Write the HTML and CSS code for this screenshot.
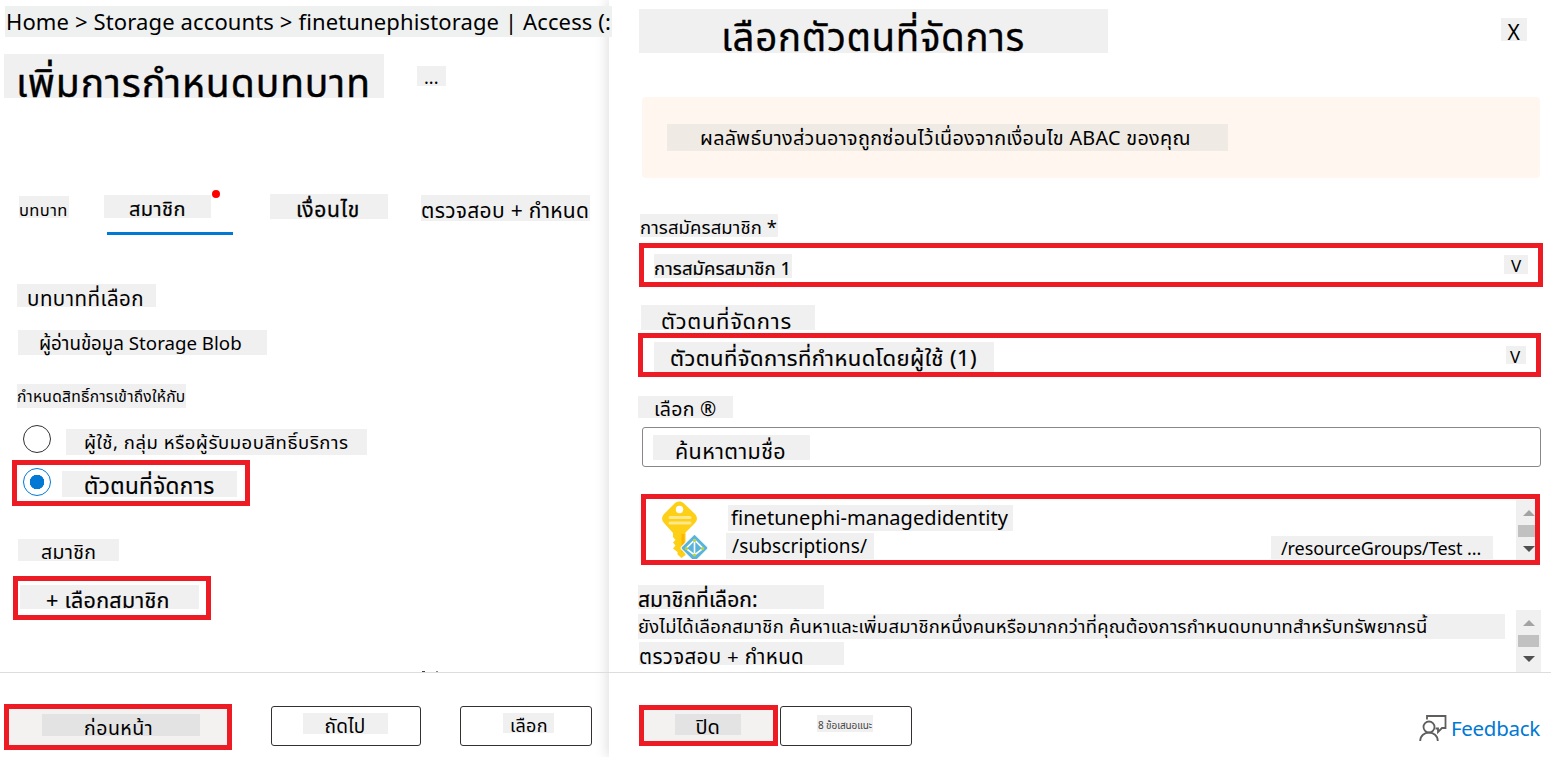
FILE: index.html
```html
<!DOCTYPE html>
<html lang="th">
<head>
<meta charset="utf-8">
<title>เพิ่มการกำหนดบทบาท</title>
<link rel="stylesheet" href="styles.css">
</head>
<body>
<div class="app">
  <main class="blade">
    <nav class="tag crumb">Home &gt; Storage accounts &gt; finetunephistorage | Access (:</nav>
    <header class="blade-head">
      <h1 class="tag title">เพิ่มการกำหนดบทบาท</h1>
      <span class="tag more">...</span>
    </header>
    <div class="tabs">
      <span class="tag tab-role">บทบาท</span>
      <div class="tab-active"><span class="tag tab-member">สมาชิก</span><i class="dot"></i></div>
      <span class="tag tab-cond">เงื่อนไข</span>
      <span class="tag tab-review">ตรวจสอบ + กำหนด</span>
    </div>
    <span class="tag role-label">บทบาทที่เลือก</span>
    <span class="tag role-value">ผู้อ่านข้อมูล Storage Blob</span>
    <span class="tag assign-label">กำหนดสิทธิ์การเข้าถึงให้กับ</span>
    <div class="option"><i class="radio"></i><span class="tag opt-user">ผู้ใช้, กลุ่ม หรือผู้รับมอบสิทธิ์บริการ</span></div>
    <div class="option option-on marked"><i class="radio radio-on"></i><span class="tag opt-managed">ตัวตนที่จัดการ</span></div>
    <span class="tag members-label">สมาชิก</span>
    <div class="add marked"><span class="tag add-text">+ เลือกสมาชิก</span></div>
    <div class="specks"><i></i><i></i></div>
    <footer class="foot foot-left">
      <div class="btn prev marked"><span class="tag prev-text">ก่อนหน้า</span></div>
      <div class="btn next"><span class="tag next-text">ถัดไป</span></div>
      <div class="btn pick"><span class="tag pick-text">เลือก</span></div>
    </footer>
  </main>
  <aside class="panel">
    <header class="panel-head">
      <h2 class="tag panel-title">เลือกตัวตนที่จัดการ</h2>
      <span class="tag close">X</span>
    </header>
    <div class="banner"><span class="tag banner-text">ผลลัพธ์บางส่วนอาจถูกซ่อนไว้เนื่องจากเงื่อนไข ABAC ของคุณ</span></div>
    <span class="tag sub-label">การสมัครสมาชิก *</span>
    <div class="select sub marked"><span class="tag sub-text">การสมัครสมาชิก 1</span><span class="tag chev">V</span></div>
    <span class="tag mi-label">ตัวตนที่จัดการ</span>
    <div class="select mi marked"><span class="tag mi-text">ตัวตนที่จัดการที่กำหนดโดยผู้ใช้ (1)</span><span class="tag chev chev-mi">V</span></div>
    <span class="tag find-label">เลือก ®</span>
    <div class="search"><span class="tag search-text">ค้นหาตามชื่อ</span></div>
    <div class="list marked">
      <svg class="key" width="48" height="60" viewBox="0 0 48 60">
        <path d="M18.500 2.500 Q20.500 2 22.500 4 L34 15 Q38 19.500 34 24 L24.500 33.500 V56 L20.500 59 L16.500 55.500 V53 L12 49.500 L14.500 46.500 L12 43.500 L14.500 41 L12 38 V34 L3 24 Q-1 19.500 3 15 L14 4 Q16 2 18.500 2.500 Z" fill="#fdd017"/>
        <path d="M20.500 35 H23.500 V50 L20.500 54 Z" fill="#ffb400"/>
        <circle cx="18.500" cy="10.500" r="3.700" fill="#fff"/>
        <path d="M9 18.500 H29 M9 24 H29" stroke="#ffe78c" stroke-width="3" stroke-linecap="round"/>
        <rect x="23.500" y="39" width="20" height="20" rx="2" transform="rotate(45 33.500 49)" fill="#59b4dc" stroke="#fff" stroke-width="1"/>
        <path d="M33.500 40 V57 M33.500 41 L25 49.500 L33.500 56 L42 49.500 Z" fill="none" stroke="#fff" stroke-width="1.600"/>
        <g fill="#b8d432"><circle cx="33.500" cy="41.500" r="1.600"/><circle cx="25.500" cy="49.500" r="1.600"/><circle cx="41.500" cy="49.500" r="1.600"/><circle cx="33.500" cy="56" r="1.600"/></g>
      </svg>
      <div class="list-lines">
        <span class="tag list-name">finetunephi-managedidentity</span>
        <div class="list-path"><span class="tag list-sub">/subscriptions/</span><span class="tag list-group">/resourceGroups/Test ...</span></div>
      </div>
      <div class="scroll"><i class="up"></i><i class="thumb"></i><i class="down"></i></div>
    </div>
    <div class="chosen">
      <div class="chosen-lines">
        <span class="tag chosen-label">สมาชิกที่เลือก:</span>
        <span class="tag chosen-desc">ยังไม่ได้เลือกสมาชิก ค้นหาและเพิ่มสมาชิกหนึ่งคนหรือมากกว่าที่คุณต้องการกำหนดบทบาทสำหรับทรัพยากรนี้</span>
        <span class="tag chosen-review">ตรวจสอบ + กำหนด</span>
      </div>
      <div class="scroll"><i class="up"></i><i class="thumb"></i><i class="down"></i></div>
    </div>
    <footer class="foot foot-right">
      <div class="btn shut marked"><span class="tag shut-text">ปิด</span></div>
      <div class="btn tips"><span class="tag tips-text">8 ข้อเสนอแนะ</span></div>
      <a class="feedback">
        <svg width="28" height="28" viewBox="0 0 28 28" fill="none" stroke="#605e5c" stroke-width="1.800">
          <path d="M8 5.500 V2 H26.500 V14 H23 L19 18 V14.500 H16.500"/><circle cx="10" cy="13" r="5.500"/><path d="M1.200 27 C1.200 15.800 18.800 15.800 18.800 27"/>
        </svg>
        <span class="tag fb-text">Feedback</span>
      </a>
    </footer>
  </aside>
</div>
</body>
</html>
```
FILE: styles.css
```css
* { box-sizing: border-box; }
body { margin: 0; background: #fff; overflow: hidden; }
h1, h2 { margin: 0; font-weight: 400; }
i { display: block; flex: none; }
.app { display: flex; width: 1551px; height: 757px; font-family: "Noto Sans", "Noto Sans Thai", sans-serif; color: #000; }

/* Shaded label: --b is the baseline offset from its top, --x the text inset */
.tag {
  display: block; flex: none; white-space: nowrap; background: #f0f0f0;
  width: var(--w); height: var(--h); padding-left: var(--x, 0);
  font-size: var(--fs); letter-spacing: var(--ls, 0);
  line-height: calc(2 * (var(--b) - 0.388 * var(--fs)));
}
.marked { border: 5px solid #ed1c24; }

.blade { width: 609px; flex: none; display: flex; flex-direction: column; }
.crumb { --w: 607px; --h: 31px; --x: 1px; --b: 24px; --fs: 22px; --ls: 0.13px; margin: 6px 0 0 5px; background: #eff1f1; position: relative; z-index: 2; }
.blade-head { display: flex; margin: 17px 0 0 4px; height: 44px; }
.title { --w: 380px; --h: 44px; --x: 12px; --b: 43px; --fs: 39px; --ls: 0.95px; -webkit-text-stroke: 0.4px #000; }
.more { --w: 29px; --h: 20px; --x: 7px; --b: 18px; --fs: 18px; margin: 12px 0 0 33px; }
.tabs { display: flex; margin: 96px 0 0 19px; height: 41px; }
.tab-role { --w: 50px; --h: 22px; --x: 0px; --b: 20px; --fs: 16.500px; --ls: 0.4px; margin-top: 2px; }
.tab-active { margin: 1px 0 0 35px; width: 129px; height: 40px; position: relative; }
.tab-active::after { content: ""; display: block; margin: 14px 0 0 3px; width: 126px; height: 3px; background: #0078d4; }
.tab-member { --w: 107px; --h: 23px; --x: 25px; --b: 22px; --fs: 20px; --ls: 0.4px; -webkit-text-stroke: 0.2px #000; }
.dot { position: absolute; left: 108px; top: -5px; width: 8px; height: 8px; border-radius: 50%; background: #f00; }
.tab-cond { --w: 118px; --h: 25px; --x: 26px; --b: 24px; --fs: 21px; --ls: 0.8px; -webkit-text-stroke: 0.3px #000; margin-left: 37px; }
.tab-review { --w: 169px; --h: 26px; --x: 0px; --b: 24px; --fs: 21px; --ls: 0.3px; margin: 1px 0 0 33px; }
.role-label { --w: 139px; --h: 23px; --x: 10px; --b: 22px; --fs: 20.500px; --ls: 0.5px; margin: 49px 0 0 17px; }
.role-value { --w: 249px; --h: 25px; --x: 21px; --b: 20px; --fs: 18.700px; margin: 23px 0 0 18px; }
.assign-label { --w: 169px; --h: 24px; --x: 0px; --b: 19px; --fs: 15.600px; --ls: 0.25px; margin: 29px 0 0 17px; }
.option { display: flex; margin: 17px 0 0 23px; height: 30px; }
.radio { width: 28px; height: 28px; border: 1px solid #323130; border-radius: 50%; }
.opt-user { --w: 301px; --h: 26px; --x: 18px; --b: 20px; --fs: 18.500px; --ls: 0.54px; margin: 4px 0 0 15px; }
.option-on { width: 238px; height: 46px; margin: 5px 0 0 12px; padding: 3px 0 0 6px; }
.radio-on { border-color: #0078d4; background: radial-gradient(circle, #0078d4 0 7px, #fff 7.500px); }
.opt-managed { --w: 175px; --h: 26px; --x: 22px; --b: 24px; --fs: 22.500px; --ls: 0.4px; -webkit-text-stroke: 0.2px #000; margin: 3px 0 0 11px; }
.members-label { --w: 101px; --h: 22px; --x: 23px; --b: 21px; --fs: 19.500px; --ls: 0.4px; margin: 33px 0 0 18px; }
.add { width: 198px; height: 44px; margin: 15px 0 0 13px; padding: 4px 0 0 2px; }
.add-text { --w: 179px; --h: 24px; --x: 26px; --b: 23.500px; --fs: 21.500px; --ls: 0.3px; -webkit-text-stroke: 0.2px #000; }
.specks { display: flex; gap: 11px; margin: 51px 0 0 422px; height: 1px; }
.specks i { width: 3px; height: 1px; background: #444; }
.specks i + i { width: 2px; background: #888; }
.foot { display: flex; border-top: 1px solid #ddd; height: 85px; }
.btn { border: 1px solid #323130; border-radius: 3px; height: 40px; flex: none; }
.foot-left { padding: 31px 0 0 4px; }
.btn.marked { border: 5px solid #ed1c24; background: #f3f2f1; border-radius: 0; }
.btn.prev { width: 228px; height: 46px; padding: 5px 0 0 33px; }
.prev-text { --w: 158px; --h: 22px; --x: 42px; --b: 22px; --fs: 19.500px; --ls: 0.5px; background: #e3e3e3; }
.next { width: 150px; margin: 2px 0 0 39px; padding: 6px 0 0 31px; }
.next-text { --w: 85px; --h: 21px; --x: 21.500px; --b: 21px; --fs: 19px; --ls: 0.2px; }
.pick { width: 132px; margin: 2px 0 0 39px; padding: 6px 0 0 42px; }
.pick-text { --w: 51px; --h: 20px; --x: 7px; --b: 19.500px; --fs: 18px; --ls: 0.3px; }

.panel { width: 942px; flex: none; display: flex; flex-direction: column; background: #fff; position: relative; z-index: 1; box-shadow: -2px 0 12px rgba(0,0,0,.13); }
.blade, .crumb { z-index: 2; }
.panel-head { display: flex; justify-content: space-between; margin: 9px 24px 0 30px; height: 44px; }
.panel-title { --w: 469px; --h: 44px; --x: 82px; --b: 42px; --fs: 38.500px; --ls: 0.65px; -webkit-text-stroke: 0.3px #000; }
.close { --w: 26px; --h: 23px; --x: 6.500px; --b: 22.500px; --fs: 21px; margin-top: 9px; }
.banner { margin: 44px 0 0 33px; width: 898px; height: 81px; border-radius: 4px; background: #fff6f0; padding: 27px 0 0 25px; }
.banner-text { --w: 561px; --h: 27px; --x: 33px; --b: 22px; --fs: 19.800px; --ls: 0.31px; background: #efeae4; }
.sub-label { --w: 138px; --h: 23px; --x: 0px; --b: 20px; --fs: 18.500px; --ls: 0.1px; margin: 36px 0 0 31px; }
.select { display: flex; justify-content: space-between; height: 44px; }
.sub { width: 904px; margin: 6px 0 0 30px; padding: 6px 10px 0; }
.sub-text { --w: 138px; --h: 24px; --x: 0px; --b: 21px; --fs: 18.500px; --ls: 0.08px; -webkit-text-stroke: 0.2px #000; }
.chev { --w: 24px; --h: 19px; --x: 7px; --b: 18px; --fs: 17px; margin-top: 1px; }
.mi-label { --w: 174px; --h: 25px; --x: 20px; --b: 24px; --fs: 22px; --ls: 0.7px; margin: 18px 0 0 32px; }
.mi { width: 903px; margin: 3px 0 0 29px; padding: 4px 10px 0 11px; }
.mi-text { --w: 340px; --h: 30px; --x: 16px; --b: 24px; --fs: 22px; --ls: 0.42px; -webkit-text-stroke: 0.15px #000; }
.chev-mi { --w: 20px; --h: 18px; --x: 4px; --b: 17.500px; margin-top: 4px; }
.find-label { --w: 95px; --h: 22px; --x: 16px; --b: 21px; --fs: 19.500px; --ls: 0.25px; margin: 19px 0 0 29px; }
.search { width: 899px; height: 40px; margin: 9px 0 0 33px; border: 1px solid #8a8886; border-radius: 3px; padding: 7px 0 0 10px; }
.search-text { --w: 157px; --h: 25px; --x: 22px; --b: 24px; --fs: 21.500px; --ls: 0.4px; }
.list { display: flex; width: 899px; height: 71px; margin: 27px 0 0 32px; overflow: hidden; }
.key { flex: none; margin: 0 0 0 15px; }
.list-lines { width: 807px; flex: none; padding: 6px 0 0 17px; }
.list-name { --w: 285px; --h: 26px; --x: 3px; --b: 21px; --fs: 20px; --ls: 0.06px; margin-left: 2px; }
.list-path { display: flex; margin-top: 2px; }
.list-sub { --w: 148px; --h: 26px; --x: 6px; --b: 21px; --fs: 19px; --ls: 0.11px; }
.list-group { --w: 222px; --h: 23px; --x: 10px; --b: 19px; --fs: 18px; --ls: -0.08px; margin: 3px 0 0 397px; }
.scroll { flex: none; width: 25px; height: 62px; background: #f0f0f0; }
.list .scroll { margin-top: 1px; }
.up, .down { width: 0; height: 0; border: solid transparent; border-width: 0 6px 6px; border-bottom-color: #a3a3a3; margin: 10px 0 0 6.500px; }
.down { border-width: 6px 6px 0; border-top-color: #505050; margin-top: 9px; }
.thumb { width: 21px; height: 12px; margin: 9px 0 0 2px; background: #c1c1c1; }
.chosen { display: flex; margin: 20px 0 0 29px; height: 87px; }
.chosen-lines { width: 878px; flex: none; }
.chosen .scroll { margin-top: 25px; }
.chosen-label { --w: 186px; --h: 24px; --x: 0px; --b: 22.500px; --fs: 21px; --ls: 0.1px; -webkit-text-stroke: 0.2px #000; }
.chosen-desc { --w: 867px; --h: 25px; --x: 0px; --b: 19px; --fs: 18.400px; --ls: 0.25px; margin-top: 5px; }
.chosen-review { --w: 205px; --h: 23px; --x: 0px; --b: 22.500px; --fs: 20.500px; --ls: 0.35px; margin: 3px 0 0 1px; }
.foot-right { padding: 32px 0 0 30px; }
.btn.shut { width: 139px; height: 41px; padding: 4px 0 0 31px; }
.shut-text { --w: 66px; --h: 21px; --x: 20.500px; --b: 20.500px; --fs: 20px; background: #e3e3e3; }
.tips { width: 132px; margin: 1px 0 0 2px; padding: 8px 0 0 36px; }
.tips-text { --w: 56px; --h: 17px; --x: 1px; --b: 14px; --fs: 10px; --ls: -0.1px; color: #444; }
.feedback { display: flex; margin: 9px 0 0 507px; }
.fb-text { --w: 92px; --h: 28px; --x: 4px; --b: 22.500px; --fs: 20.500px; --ls: -0.3px; color: #0078d4; background: none; }
```
